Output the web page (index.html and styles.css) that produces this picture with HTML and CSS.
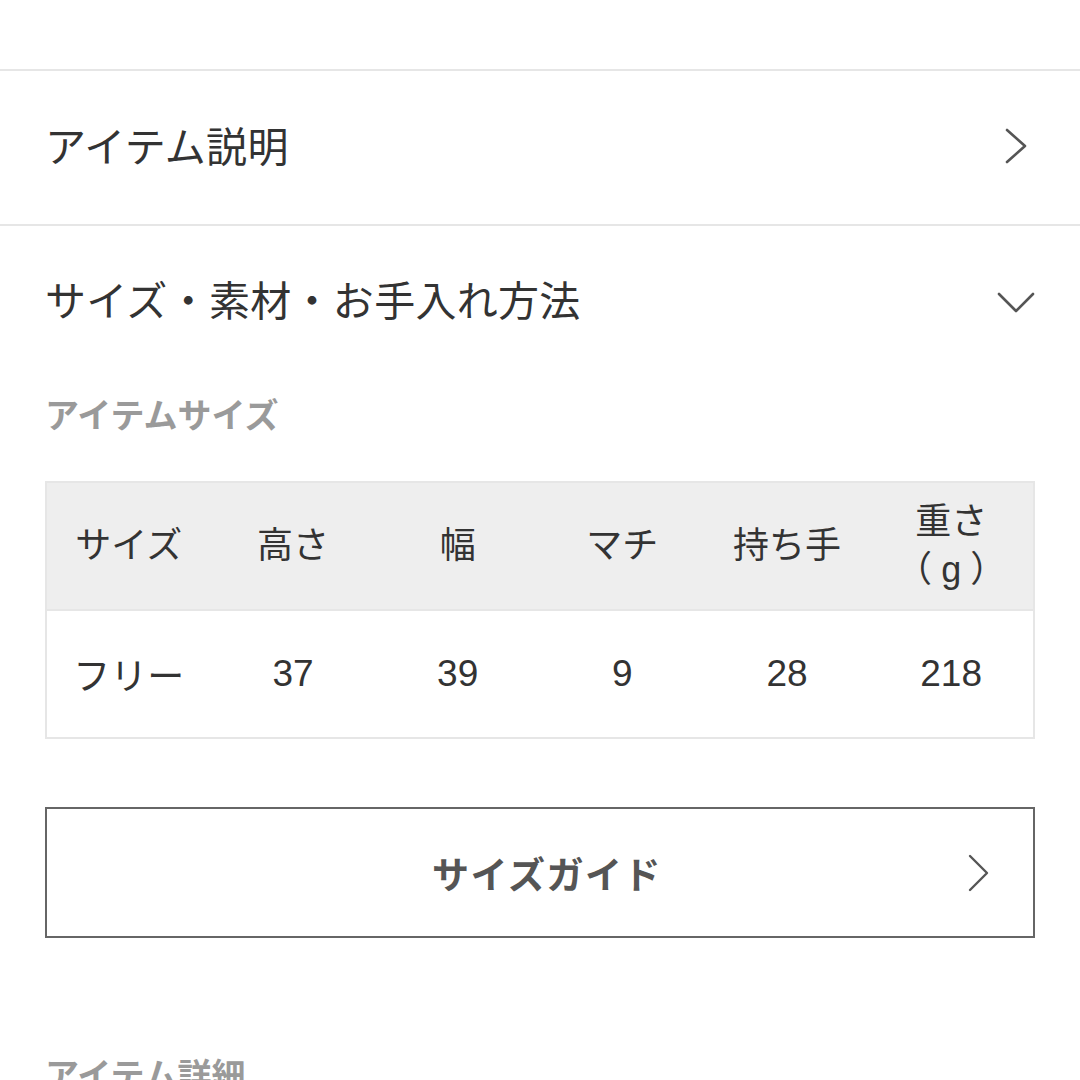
FILE: index.html
```html
<!DOCTYPE html>
<html lang="ja">
<head>
<meta charset="utf-8">
<link rel="stylesheet" href="styles.css">
</head>
<body>
<div class="page">
  <div class="top-space"></div>
  <div class="acc-row">
    <span class="acc-title">アイテム説明</span>
    <svg class="chev-right" width="24" height="36" viewBox="0 0 24 36"><polyline points="3,2 21,18 3,34" fill="none" stroke="#555" stroke-width="2.6" stroke-linecap="round" stroke-linejoin="round"/></svg>
  </div>
  <div class="acc-row open">
    <span class="acc-title">サイズ・素材・お手入れ方法</span>
    <svg class="chev-down" width="40" height="24" viewBox="0 0 40 24"><polyline points="3,4 20,21 37,4" fill="none" stroke="#555" stroke-width="2.6" stroke-linecap="round" stroke-linejoin="round"/></svg>
  </div>
  <div class="section">
    <h3 class="label">アイテムサイズ</h3>
    <table class="size-table">
      <thead>
        <tr><th>サイズ</th><th>高さ</th><th>幅</th><th>マチ</th><th>持ち手</th><th>重さ<br>（<span class="unit">g</span>）</th></tr>
      </thead>
      <tbody>
        <tr><td>フリー</td><td>37</td><td>39</td><td>9</td><td>28</td><td>218</td></tr>
      </tbody>
    </table>
    <div class="guide-btn">
      <span class="guide-text">サイズガイド</span>
      <svg class="guide-chev" width="24" height="38" viewBox="0 0 24 38"><polyline points="3,2 20,19 3,36" fill="none" stroke="#555" stroke-width="2.4" stroke-linecap="round" stroke-linejoin="round"/></svg>
    </div>
    <h3 class="label label2">アイテム詳細</h3>
  </div>
</div>
</body>
</html>
```
FILE: styles.css
```css
html, body {
  margin: 0;
  padding: 0;
  background: #fff;
}
body {
  font-family: "Liberation Sans", "Noto Sans CJK JP", sans-serif;
  color: #333;
  overflow: hidden;
  height: 1080px;
  text-spacing-trim: space-all;
}
.page {
  width: 1080px;
}
.top-space {
  height: 69px;
  border-bottom: 2px solid #e6e6e6;
}
.acc-row {
  height: 153px;
  display: flex;
  align-items: center;
  justify-content: space-between;
  padding: 0 52px 0 45px;
  border-bottom: 2px solid #e6e6e6;
}
.acc-row.open {
  border-bottom: none;
  height: 152px;
  padding-right: 44px;
}
.acc-title {
  font-size: 41px;
  letter-spacing: 0.3px;
  color: #333;
  margin-top: -8px;
}
.chev-right { display: block; margin-top: -4px; }
.chev-down { display: block; }
.section {
  padding: 0 45px;
}
.label {
  margin: 0;
  font-size: 34px;
  line-height: 40px;
  font-weight: bold;
  color: #9a9a9a;
  margin-top: 18px;
}
.size-table {
  width: 100%;
  box-sizing: border-box;
  margin-top: 45px;
  border-collapse: collapse;
  border: 2px solid #e6e6e6;
  table-layout: fixed;
}
.size-table th,
.size-table td {
  text-align: center;
  color: #333;
  padding: 0;
}
.size-table th {
  background: #eeeeee;
  height: 126px;
  font-weight: normal;
  font-size: 36px;
  line-height: 48px;
  border-bottom: 2px solid #e6e6e6;
}
.size-table .unit {
  padding: 0 9px;
}
.size-table td {
  height: 126px;
  font-size: 37px;
}
.guide-btn {
  margin-top: 68px;
  height: 127px;
  border: 2px solid #666;
  display: flex;
  align-items: center;
  justify-content: center;
  position: relative;
  padding-left: 14px;
}
.guide-text {
  font-size: 37px;
  font-weight: bold;
  color: #555;
  letter-spacing: 1.5px;
}
.guide-chev {
  position: absolute;
  right: 42px;
  top: 45px;
}
.label2 {
  margin-top: 118px;
}
```
